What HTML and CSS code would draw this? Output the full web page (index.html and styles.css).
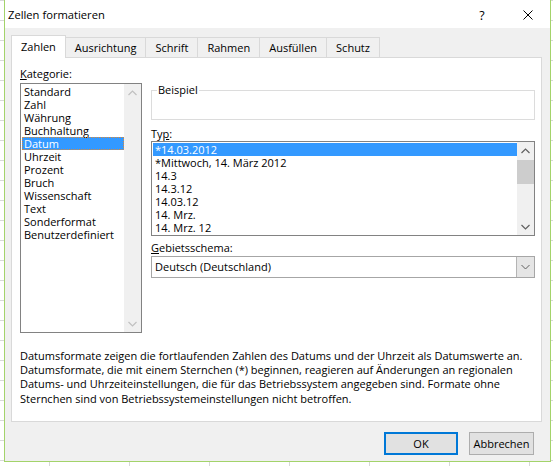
FILE: index.html
```html
<!DOCTYPE html>
<html lang="de">
<head>
<meta charset="utf-8">
<title>Zellen formatieren</title>
<link rel="stylesheet" href="styles.css">
</head>
<body>
<div class="window">
  <div class="titlebar">
    <span class="title">Zellen formatieren</span>
    <span class="caption-btn help">?</span>
    <span class="caption-btn close"><svg width="10" height="10" viewBox="0 0 10 10"><path d="M0.5 0.5 L9.5 9.5 M9.5 0.5 L0.5 9.5" stroke="#000" stroke-width="1" fill="none"/></svg></span>
  </div>
  <div class="client">
    <div class="tabs">
      <div class="tab active">Zahlen</div>
      <div class="tab">Ausrichtung</div>
      <div class="tab">Schrift</div>
      <div class="tab">Rahmen</div>
      <div class="tab">Ausfüllen</div>
      <div class="tab">Schutz</div>
    </div>
    <div class="panel">
      <div class="columns">
        <div class="col-left">
          <div class="label cat-label"><u>K</u>ategorie:</div>
          <div class="listbox cat-list">
            <ul class="items">
              <li>Standard</li>
              <li>Zahl</li>
              <li>Währung</li>
              <li>Buchhaltung</li>
              <li class="selected focused">Datum</li>
              <li>Uhrzeit</li>
              <li>Prozent</li>
              <li>Bruch</li>
              <li>Wissenschaft</li>
              <li>Text</li>
              <li>Sonderformat</li>
              <li>Benutzerdefiniert</li>
            </ul>
            <div class="vscroll disabled">
              <span class="arrow"><svg width="9" height="6" viewBox="0 0 9 6"><path d="M0.5 5 L4.5 1 L8.5 5" stroke="currentColor" stroke-width="1.2" fill="none"/></svg></span>
              <span class="track"></span>
              <span class="arrow"><svg width="9" height="6" viewBox="0 0 9 6"><path d="M0.5 1 L4.5 5 L8.5 1" stroke="currentColor" stroke-width="1.2" fill="none"/></svg></span>
            </div>
          </div>
        </div>
        <div class="col-right">
          <fieldset class="sample"><legend>Beispiel</legend><div class="sample-body"></div></fieldset>
          <div class="label typ-label">Ty<u>p</u>:</div>
          <div class="listbox typ-list">
            <ul class="items">
              <li class="selected">*14.03.2012</li>
              <li>*Mittwoch, 14. März 2012</li>
              <li>14.3</li>
              <li>14.3.12</li>
              <li>14.03.12</li>
              <li>14. Mrz.</li>
              <li>14. Mrz. 12</li>
            </ul>
            <div class="vscroll">
              <span class="arrow"><svg width="9" height="6" viewBox="0 0 9 6"><path d="M0.5 5 L4.5 1 L8.5 5" stroke="currentColor" stroke-width="1.2" fill="none"/></svg></span>
              <span class="track"><span class="thumb"></span></span>
              <span class="arrow"><svg width="9" height="6" viewBox="0 0 9 6"><path d="M0.5 1 L4.5 5 L8.5 1" stroke="currentColor" stroke-width="1.2" fill="none"/></svg></span>
            </div>
          </div>
          <div class="label geo-label"><u>G</u>ebietsschema:</div>
          <div class="combo">
            <span class="combo-text">Deutsch (Deutschland)</span>
            <span class="combo-btn"><svg width="9" height="6" viewBox="0 0 9 6"><path d="M0.5 1 L4.5 5 L8.5 1" stroke="currentColor" stroke-width="1" fill="none"/></svg></span>
          </div>
        </div>
      </div>
      <p class="desc">Datumsformate zeigen die fortlaufenden Zahlen des Datums und der Uhrzeit als Datumswerte an.<br>Datumsformate, die mit einem Sternchen (*) beginnen, reagieren auf Änderungen an regionalen<br>Datums- und Uhrzeiteinstellungen, die für das Betriebssystem angegeben sind. Formate ohne<br>Sternchen sind von Betriebssystemeinstellungen nicht betroffen.</p>
    </div>
    <div class="buttons">
      <button class="btn btn-default">OK</button>
      <button class="btn btn-cancel">Abbrechen</button>
    </div>
  </div>
</div>
</body>
</html>
```
FILE: styles.css
```css
* { box-sizing: border-box; }
html, body { margin: 0; padding: 0; }
body {
  width: 553px;
  height: 466px;
  overflow: hidden;
  font-family: "Open Sans", "Noto Sans", sans-serif;
  font-size: 11px;
  color: #000;
  background-color: #fff;
  background-image:
    linear-gradient(to bottom, #d8d8d8 1px, transparent 1px),
    linear-gradient(to right, #d8d8d8 1px, transparent 1px);
  background-size: 100% 20px, 80px 100%;
  background-position: 0 0, 49px 0;
}
.window {
  margin-left: 4px;
  width: 547px;
  height: 462px;
  border: 1px solid #a3d36a;
  border-top: none;
  display: flex;
  flex-direction: column;
}
.titlebar {
  height: 28px;
  background: #fff;
  display: flex;
  align-items: center;
}
.title {
  flex: 1;
  padding: 1px 0 0 3px;
  font-size: 11.2px;
}
.caption-btn {
  width: 46px;
  height: 28px;
  display: flex;
  align-items: center;
  justify-content: center;
  padding-top: 2px;
}
.help { font-size: 12.5px; }
.close { width: 45px; }

.client {
  flex: 1;
  background: #f0f0f0;
  padding: 7px 0 0 6px;
  display: flex;
  flex-direction: column;
}
.tabs {
  display: flex;
  align-items: flex-end;
  height: 22px;
  position: relative;
  z-index: 1;
}
.tab {
  height: 20px;
  line-height: 19px;
  padding: 0 9px;
  border: 1px solid #d9d9d9;
  border-bottom: none;
  margin-left: -1px;
  background: #f0f0f0;
  white-space: nowrap;
}
.tab.active {
  height: 23px;
  line-height: 22px;
  margin-left: 0;
  margin-bottom: -1px;
  background: #fff;
  padding: 0 9px;
  position: relative;
  z-index: 2;
}
.panel {
  width: 531px;
  height: 365px;
  border: 1px solid #d9d9d9;
  background: #fff;
  padding: 8px 6px 0 8px;
}
.columns {
  display: flex;
  gap: 9px;
}
.col-left { width: 122px; }
.col-right { width: 384px; padding-top: 17px; }
.label {
  height: 15px;
  line-height: 15px;
  white-space: nowrap;
}
.cat-label { margin-bottom: 2px; }
.typ-label { margin-top: 6px; }
.geo-label { margin-top: 4px; margin-bottom: 1px; }

.listbox {
  border: 1px solid #828282;
  background: #fff;
  display: flex;
}
.cat-list { height: 250px; }
.typ-list { height: 95px; }
.items {
  flex: 1;
  list-style: none;
  margin: 0;
  padding: 1px 0 0 1px;
  overflow: hidden;
}
.items li {
  height: 13px;
  line-height: 13px;
  padding-left: 2px;
  white-space: nowrap;
}
.items li.selected {
  background: #3399ff;
  color: #fff;
}
.items li.focused {
  outline: 1px dotted #d9893a;
  outline-offset: -1px;
}
.vscroll {
  width: 17px;
  background: #f0f0f0;
  display: flex;
  flex-direction: column;
  color: #606060;
}
.vscroll.disabled { color: #c0c0c0; }
.arrow {
  height: 17px;
  display: flex;
  align-items: center;
  justify-content: center;
}
.arrow svg { display: block; }
.track { flex: 1; }
.thumb {
  display: block;
  margin-top: 1px;
  height: 24px;
  background: #cdcdcd;
}
.sample {
  margin: 0;
  padding: 0;
  border: 1px solid #dcdcdc;
  min-inline-size: 0;
}
.sample legend {
  margin-left: 5px;
  padding: 0 1px;
  line-height: 14px;
}
.sample-body { height: 22px; }
.combo {
  height: 22px;
  border: 1px solid #a6a6a6;
  background: #fff;
  display: flex;
}
.combo-text {
  flex: 1;
  padding-left: 3px;
  line-height: 20px;
}
.combo-btn {
  width: 18px;
  background: #e5e5e5;
  border-left: 1px solid #b4b4b4;
  display: flex;
  align-items: center;
  justify-content: center;
  color: #606060;
}
.desc {
  margin: 16px 0 0 0;
  line-height: 14.2px;
  white-space: nowrap;
}
.buttons {
  display: flex;
  justify-content: flex-end;
  gap: 11px;
  margin-top: 10px;
  padding-right: 16px;
}
.btn {
  height: 23px;
  padding: 0;
  font: inherit;
  color: #000;
  background: #e1e1e1;
  border: 1px solid #adadad;
}
.btn-default { width: 74px; border: 2px solid #0078d7; }
.btn-cancel { width: 65px; }
```
